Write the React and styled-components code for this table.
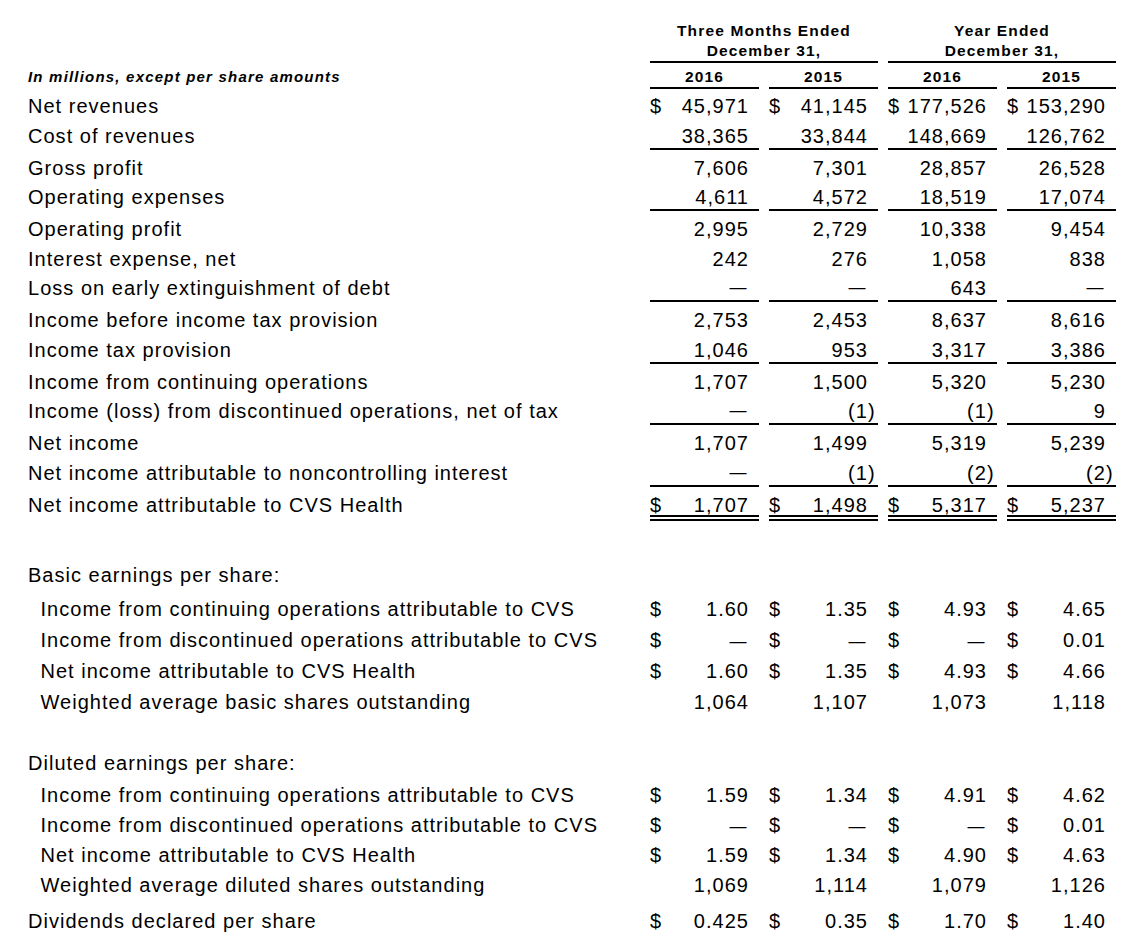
import React from "react";
import styled, { createGlobalStyle } from "styled-components";

const Global = createGlobalStyle`
  html, body { margin: 0; padding: 0; background: #fff; }
  body {
    font-family: "Liberation Sans", Arial, Helvetica, sans-serif;
    color: #000;
  }
`;

const Page = styled.div`
  width: 1134px;
  box-sizing: border-box;
  padding: 19.5px 0 20px 28px;
`;

const Grid = styled.div`
  display: grid;
  grid-template-columns: 612px repeat(4, 109px);
  column-gap: 10px;
  align-items: start;
`;

const HeadRow = styled(Grid)`
  font-size: 15.5px;
  font-weight: 700;
  letter-spacing: 1.15px;
  margin-top: ${(p) => p.$mt || 0}px;
`;

const GroupHead = styled.div`
  grid-column: span 2;
  text-align: center;
  line-height: ${(p) => (p.$ruled ? 20 : 21)}px;
  border-bottom: ${(p) => (p.$ruled ? "2px solid #000" : "none")};
`;

const YearHead = styled.div`
  text-align: center;
  line-height: 20px;
  border-bottom: 2px solid #000;
`;

const UnitsNote = styled.div`
  line-height: 20px;
  font-style: italic;
  font-size: 15px;
  letter-spacing: 1.2px;
`;

const Body = styled.div`
  margin-top: ${(p) => p.$mt || 0}px;
`;

const Row = styled(Grid)`
  height: ${(p) => p.$h}px;
  font-size: 20px;
  letter-spacing: 1.02px;
`;

const Label = styled.div`
  line-height: 24px;
  padding-top: 3px;
  padding-left: ${(p) => (p.$indent ? 12.5 : 0)}px;
  white-space: nowrap;
`;

const Cell = styled.div`
  display: flex;
  align-items: baseline;
  line-height: ${(p) => (p.$rule === "double" ? 20 : 24)}px;
  padding: ${(p) => (p.$rule === "double" ? 5 : 3)}px 10px 0 0;
  border-bottom: ${(p) =>
    p.$rule === "double"
      ? "6px double #000"
      : p.$rule
      ? "2px solid #000"
      : "none"};
  white-space: nowrap;
`;

const Dollar = styled.span``;

const Num = styled.span`
  margin-left: auto;
`;

const Dash = styled.span`
  margin-left: auto;
  margin-right: 2.5px;
  font-size: 17px;
  letter-spacing: 0;
`;

const Hang = styled.span`
  margin-right: -7.6px;
`;

function Value({ v }) {
  if (v === "—") return <Dash>—</Dash>;
  if (v.startsWith("(")) {
    return (
      <Num>
        {v.slice(0, -1)}
        <Hang>)</Hang>
      </Num>
    );
  }
  return <Num>{v}</Num>;
}

function DataRow({ row, h }) {
  return (
    <Row $h={h}>
      <Label $indent={row.indent}>{row.label}</Label>
      {(row.vals || []).map((v, i) => (
        <Cell key={i} $rule={row.rule}>
          {row.dollar && <Dollar>$</Dollar>}
          <Value v={v} />
        </Cell>
      ))}
    </Row>
  );
}

const income = [
  { label: "Net revenues", dollar: true, vals: ["45,971", "41,145", "177,526", "153,290"] },
  { label: "Cost of revenues", rule: "single", vals: ["38,365", "33,844", "148,669", "126,762"] },
  { label: "Gross profit", vals: ["7,606", "7,301", "28,857", "26,528"] },
  { label: "Operating expenses", rule: "single", vals: ["4,611", "4,572", "18,519", "17,074"] },
  { label: "Operating profit", vals: ["2,995", "2,729", "10,338", "9,454"] },
  { label: "Interest expense, net", vals: ["242", "276", "1,058", "838"] },
  { label: "Loss on early extinguishment of debt", rule: "single", vals: ["—", "—", "643", "—"] },
  { label: "Income before income tax provision", vals: ["2,753", "2,453", "8,637", "8,616"] },
  { label: "Income tax provision", rule: "single", vals: ["1,046", "953", "3,317", "3,386"] },
  { label: "Income from continuing operations", vals: ["1,707", "1,500", "5,320", "5,230"] },
  { label: "Income (loss) from discontinued operations, net of tax", rule: "single", vals: ["—", "(1)", "(1)", "9"] },
  { label: "Net income", vals: ["1,707", "1,499", "5,319", "5,239"] },
  { label: "Net income attributable to noncontrolling interest", rule: "single", vals: ["—", "(1)", "(2)", "(2)"] },
  { label: "Net income attributable to CVS Health", rule: "double", dollar: true, vals: ["1,707", "1,498", "5,317", "5,237"] },
];

const basic = [
  { label: "Income from continuing operations attributable to CVS", indent: true, dollar: true, vals: ["1.60", "1.35", "4.93", "4.65"] },
  { label: "Income from discontinued operations attributable to CVS", indent: true, dollar: true, vals: ["—", "—", "—", "0.01"] },
  { label: "Net income attributable to CVS Health", indent: true, dollar: true, vals: ["1.60", "1.35", "4.93", "4.66"] },
  { label: "Weighted average basic shares outstanding", indent: true, vals: ["1,064", "1,107", "1,073", "1,118"] },
];

const diluted = [
  { label: "Income from continuing operations attributable to CVS", indent: true, dollar: true, vals: ["1.59", "1.34", "4.91", "4.62"] },
  { label: "Income from discontinued operations attributable to CVS", indent: true, dollar: true, vals: ["—", "—", "—", "0.01"] },
  { label: "Net income attributable to CVS Health", indent: true, dollar: true, vals: ["1.59", "1.34", "4.90", "4.63"] },
  { label: "Weighted average diluted shares outstanding", indent: true, vals: ["1,069", "1,114", "1,079", "1,126"] },
];

const dividends = { label: "Dividends declared per share", dollar: true, vals: ["0.425", "0.35", "1.70", "1.40"] };

export default function App() {
  return (
    <Page>
      <Global />
      <HeadRow>
        <div />
        <GroupHead>Three Months Ended</GroupHead>
        <GroupHead>Year Ended</GroupHead>
      </HeadRow>
      <HeadRow>
        <div />
        <GroupHead $ruled>December 31,</GroupHead>
        <GroupHead $ruled>December 31,</GroupHead>
      </HeadRow>
      <HeadRow $mt={4}>
        <UnitsNote>In millions, except per share amounts</UnitsNote>
        <YearHead>2016</YearHead>
        <YearHead>2015</YearHead>
        <YearHead>2016</YearHead>
        <YearHead>2015</YearHead>
      </HeadRow>

      <Body $mt={2.5}>
        {income.map((r, i) => (
          <DataRow key={i} row={r} h={r.rule ? 32 : 29.5} />
        ))}
      </Body>

      <Body $mt={38}>
        <DataRow row={{ label: "Basic earnings per share:" }} h={34} />
        {basic.map((r, i) => (
          <DataRow key={i} row={r} h={31} />
        ))}
      </Body>

      <Body $mt={30}>
        <DataRow row={{ label: "Diluted earnings per share:" }} h={32} />
        {diluted.map((r, i) => (
          <DataRow key={i} row={r} h={30} />
        ))}
      </Body>

      <Body $mt={6}>
        <DataRow row={dividends} h={30} />
      </Body>
    </Page>
  );
}
